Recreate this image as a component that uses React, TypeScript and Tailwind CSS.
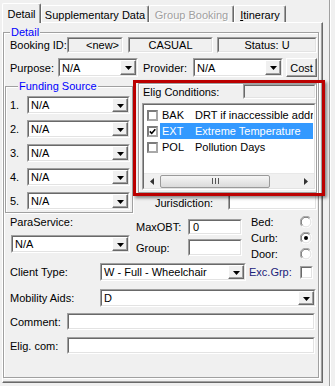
import React from "react";

const sunkenOuter = "border border-t-[#a0a0a0] border-l-[#a0a0a0] border-b-white border-r-white";
const sunkenInner = "border border-t-[#696969] border-l-[#696969] border-b-[#e3e3e3] border-r-[#e3e3e3]";
const raised = "border border-t-white border-l-white border-b-[#696969] border-r-[#696969] shadow-[inset_-1px_-1px_0_#a0a0a0]";
const etched = "border border-[#a0a0a0] shadow-[inset_1px_1px_0_#fff,1px_1px_0_#fff]";

type BoxProps = { className?: string; inner?: string; children?: React.ReactNode };

function Box({ className = "", inner = "bg-white", children }: BoxProps) {
  return (
    <div className={`${sunkenOuter} shrink-0 ${className}`}>
      <div className={`${sunkenInner} ${inner} w-full h-full flex items-center overflow-hidden whitespace-nowrap`}>
        {children}
      </div>
    </div>
  );
}

function DropArrow() {
  return (
    <div className={`${raised} bg-[#f0f0f0] w-[16px] h-full ml-auto shrink-0 flex items-center justify-center`}>
      <svg width="7" height="4" viewBox="0 0 7 4" className="mt-[1px]">
        <path d="M0 0H7L3.5 4Z" fill="#000" />
      </svg>
    </div>
  );
}

function Combo({ value, className = "" }: { value: string; className?: string }) {
  return (
    <Box className={className}>
      <span className="pl-[2px]">{value}</span>
      <DropArrow />
    </Box>
  );
}

function Radio({ on }: { on?: boolean }) {
  return (
    <svg width="12" height="12" viewBox="0 0 12 12">
      <circle cx="6" cy="6" r="5" fill="#fff" />
      <path d="M1.8 10.2A5.9 5.9 0 0 1 10.2 1.8" fill="none" stroke="#a0a0a0" />
      <path d="M2.6 9.4A4.8 4.8 0 0 1 9.4 2.6" fill="none" stroke="#696969" />
      <path d="M10.2 1.8A5.9 5.9 0 0 1 1.8 10.2" fill="none" stroke="#fff" />
      <path d="M9.4 2.6A4.8 4.8 0 0 1 2.6 9.4" fill="none" stroke="#e3e3e3" />
      {on && <circle cx="6" cy="6" r="2" fill="#000" />}
    </svg>
  );
}

function ListCheck({ checked }: { checked?: boolean }) {
  return (
    <div className="ml-[3px] w-[11px] h-[11px] shrink-0 border-2 border-t-[#7c7c7c] border-l-[#7c7c7c] border-b-[#a8a8a8] border-r-[#a8a8a8] bg-white flex items-center justify-center">
      {checked && (
        <svg width="7" height="7" viewBox="0 0 7 7">
          <path d="M0.8 3.4L2.7 5.4L6.3 1.2" fill="none" stroke="#000" strokeWidth="1.6" />
        </svg>
      )}
    </div>
  );
}

function EligRow({ code, desc, checked, selected }: { code: string; desc: string; checked?: boolean; selected?: boolean }) {
  return (
    <div className="flex items-center h-[16px]">
      <ListCheck checked={checked} />
      <div className={`ml-[2px] mr-[1px] flex-1 h-full flex items-center pl-[2px] whitespace-nowrap overflow-hidden ${selected ? "bg-[#3399ff] text-white" : ""}`}>
        <span className="w-[33px] shrink-0">{code}</span>
        <span>{desc}</span>
      </div>
    </div>
  );
}

function HScroll() {
  return (
    <div className="mt-auto h-[15px] flex items-center bg-[#f0f0f0] border-t border-t-[#e8e8e8]">
      <div className="w-[16px] h-full flex items-center justify-center">
        <svg width="4" height="7" viewBox="0 0 4 7">
          <path d="M4 0V7L0 3.5Z" fill="#333" />
        </svg>
      </div>
      <div className="w-[110px] h-[13px] rounded-[2px] border border-[#9a9a9a] bg-gradient-to-b from-[#f6f6f6] to-[#dadada] flex items-center justify-center">
        <svg width="7" height="6" viewBox="0 0 7 6">
          <path d="M0.5 0V6M3.5 0V6M6.5 0V6" stroke="#555" />
        </svg>
      </div>
      <div className="flex-1" />
      <div className="w-[16px] h-full flex items-center justify-center">
        <svg width="4" height="7" viewBox="0 0 4 7">
          <path d="M0 0V7L4 3.5Z" fill="#333" />
        </svg>
      </div>
    </div>
  );
}

function Tabs() {
  const tab = "border-l border-t border-l-white border-t-white border-r border-r-[#696969] shadow-[inset_-1px_0_0_#a0a0a0] rounded-t-[2px] flex justify-center whitespace-nowrap";
  return (
    <div className="h-[19px] flex items-end">
      <div className={`${tab} relative z-10 w-[39px] h-[20px] -mb-px pt-[4px] bg-[#f0f0f0]`}>Detail</div>
      <div className={`${tab} w-[108px] h-[17px] pt-[3px]`}>Supplementary Data</div>
      <div className={`${tab} w-[85px] h-[17px] pt-[3px] text-[#a0a0a0] [text-shadow:1px_1px_0_#fff]`}>Group Booking</div>
      <div className={`${tab} w-[52px] h-[17px] pt-[3px]`}>
        <span>
          <span className="underline">I</span>tinerary
        </span>
      </div>
    </div>
  );
}

export default function App() {
  return (
    <div className="w-[335px] h-[386px] bg-[#f0f0f0] relative overflow-hidden flex text-[11px] leading-[12px] text-black font-['Liberation_Sans',Arial,sans-serif]">
      <div className="w-[323px] pl-[2px] pt-[3px] flex flex-col">
        <Tabs />
        <div className="h-[361px] w-[321px] border-l border-t border-l-white border-t-white border-r border-b border-r-[#696969] border-b-[#696969] shadow-[inset_-1px_-1px_0_#a0a0a0] pt-[4px]">
          <fieldset className={`${etched} w-[316px] pb-[23px]`}>
            <legend className="ml-[6px] px-[1px] bg-[#f0f0f0] text-[#0000ff] leading-[11px]">Detail</legend>

            {/* booking */}
            <div className="-mt-[1px] h-[16px] flex items-center pl-[6px]">
              <span className="w-[57px] shrink-0">Booking ID:</span>
              <Box className="w-[56px] h-full" inner="bg-[#f0f0f0] justify-end pr-[2px]">&lt;new&gt;</Box>
              <Box className="ml-[5px] w-[85px] h-full" inner="bg-[#f0f0f0] justify-center">CASUAL</Box>
              <Box className="ml-[4px] w-[100px] h-full" inner="bg-[#f0f0f0] justify-center">Status: U</Box>
            </div>

            {/* purpose / provider */}
            <div className="mt-[5px] h-[19px] flex items-center pl-[6px]">
              <span className="w-[48px] shrink-0">Purpose:</span>
              <Combo value="N/A" className="w-[80px] h-full" />
              <span className="ml-[5px] w-[50px] shrink-0">Provider:</span>
              <Combo value="N/A" className="w-[90px] h-full" />
              <button className={`${raised} ml-[3px] w-[31px] h-full bg-[#f0f0f0] flex items-center justify-center`}>Cost</button>
            </div>

            {/* funding + elig */}
            <div className="mt-[3px] flex items-start">
              <fieldset className={`${etched} ml-[1px] w-[128px] pt-[4px] pb-[2px] pl-[4px] pr-[2px]`}>
                <legend className="ml-[8px] px-[1px] bg-[#f0f0f0] text-[#0000ff] leading-[12px]">Funding Source</legend>
                <div className="flex flex-col gap-[6px]">
                  {["1.", "2.", "3.", "4.", "5."].map((n) => (
                    <div key={n} className="h-[18px] flex items-center">
                      <span className="w-[17px] shrink-0">{n}</span>
                      <Combo value="N/A" className="w-[103px] h-full" />
                    </div>
                  ))}
                </div>
              </fieldset>

              <div className="ml-[5px] flex flex-col">
                <div className={`${etched} mt-[3px] w-[179px] h-[110px] flex flex-col`}>
                  <div className="h-[15px] flex items-center pl-[4px]">
                    <span className="w-[100px] shrink-0">Elig Conditions:</span>
                    <Box className="w-[73px] h-full" inner="bg-[#f0f0f0]" />
                  </div>
                  <div className={`${sunkenOuter} ml-[3px] mt-[4px] w-[174px] h-[87px]`}>
                    <div className={`${sunkenInner} bg-white w-full h-full flex flex-col overflow-hidden`}>
                      <div className="pt-[2px]">
                        <EligRow code="BAK" desc="DRT if inaccessible address" />
                        <EligRow code="EXT" desc="Extreme Temperature" checked selected />
                        <EligRow code="POL" desc="Pollution Days" />
                      </div>
                      <HScroll />
                    </div>
                  </div>
                </div>
                <div className="h-[17px] flex items-center">
                  <span className="ml-[17px] w-[73px] shrink-0 pt-[2px]">Jurisdiction:</span>
                  <Box className="w-[89px] h-full" inner="bg-white" />
                </div>
              </div>
            </div>

            {/* lower block */}
            <div className="flex items-start">
              <div className="w-[242px] flex flex-col">
                <div className="flex h-[43px]">
                  <div className="pl-[6px] w-[126px] flex flex-col">
                    <span className="mt-[3px]">ParaService:</span>
                    <Combo value="N/A" className="mt-[7px] ml-[1px] w-[119px] h-[18px]" />
                  </div>
                  <div className="ml-[6px] flex flex-col">
                    <div className="mt-[6px] h-[16px] flex items-center">
                      <span className="w-[52px] shrink-0">MaxOBT:</span>
                      <Box className="w-[54px] h-full" inner="bg-white pl-[3px]">0</Box>
                    </div>
                    <div className="mt-[4px] h-[17px] flex items-center">
                      <span className="w-[52px] shrink-0">Group:</span>
                      <Box className="w-[54px] h-full" inner="bg-white" />
                    </div>
                  </div>
                </div>
                <div className="mt-[7px] h-[18px] flex items-center pl-[6px]">
                  <span className="w-[90px] shrink-0">Client Type:</span>
                  <Combo value="W - Full - Wheelchair" className="w-[146px] h-full" />
                </div>
              </div>

              <div className="ml-[3px] w-[67px] flex flex-col">
                <div className="mt-[2px] h-[14px] flex items-center justify-between pl-[2px] pr-[4px]">
                  <span>Bed:</span>
                  <Radio />
                </div>
                <div className="mt-[2px] h-[14px] flex items-center justify-between pl-[2px] pr-[4px]">
                  <span>Curb:</span>
                  <Radio on />
                </div>
                <div className="mt-[2px] h-[14px] flex items-center justify-between pl-[2px] pr-[4px]">
                  <span>Door:</span>
                  <Radio />
                </div>
                <div className="mt-[4px] h-[14px] flex items-center justify-between pr-[3px]">
                  <span className="text-[#1b237a]">Exc.Grp:</span>
                  <Box className="w-[13px] h-[13px]" inner="bg-white" />
                </div>
              </div>
            </div>

            <div className="mt-[8px] h-[18px] flex items-center pl-[6px]">
              <span className="w-[90px] shrink-0">Mobility Aids:</span>
              <Combo value="D" className="w-[216px] h-full" />
            </div>
            <div className="mt-[6px] h-[17px] flex items-center pl-[6px]">
              <span className="w-[57px] shrink-0">Comment:</span>
              <Box className="w-[248px] h-full" />
            </div>
            <div className="mt-[7px] h-[17px] flex items-center pl-[6px]">
              <span className="w-[57px] shrink-0">Elig. com:</span>
              <Box className="w-[248px] h-full" />
            </div>
          </fieldset>
        </div>
      </div>
      <div className="ml-[6px] w-[2px] h-full border-l border-l-[#a0a0a0] border-r border-r-white" />

      {/* red annotation frame over the elig conditions */}
      <div className="absolute left-[133px] top-[80px] w-[192px] h-[116px] border-[3px] border-[#bb0000] shadow-[2px_2px_3px_rgba(0,0,0,0.45)] pointer-events-none" />
    </div>
  );
}
